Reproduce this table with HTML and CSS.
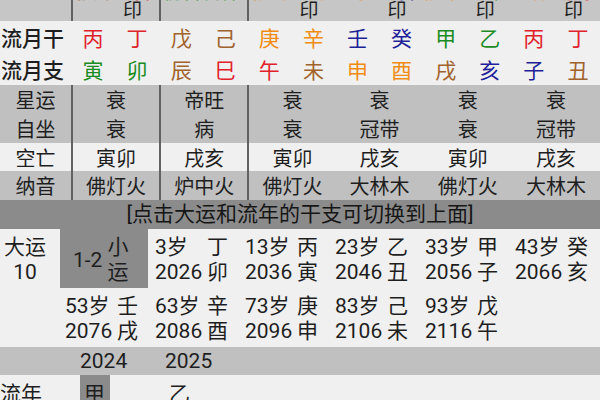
FILE: index.html
```html
<!DOCTYPE html>
<html lang="zh-CN">
<head>
<meta charset="utf-8">
<title>流月</title>
<link rel="stylesheet" href="styles.css">
</head>
<body>
<div class="page">
  <div class="row top g12">
    <div class="lab"></div>
    <div class="hc bl"><span class="gw"><span class="ghost earth">偏財</span></span><span class="yin"></span></div>
    <div class="hc"><span class="gw"><span class="ghost fire">正官</span></span><span class="yin">印</span></div>
    <div class="hc bl"><span class="gw"><span class="ghost wood">伤官</span></span><span class="yin"></span></div>
    <div class="hc"><span class="gw"><span class="ghost wood">食神</span></span><span class="yin"></span></div>
    <div class="hc bl"><span class="gw"><span class="ghost metal">偏財</span></span><span class="yin"></span></div>
    <div class="hc"><span class="gw"><span class="ghost metal">正財</span></span><span class="yin">印</span></div>
    <div class="hc"><span class="gw"><span class="ghost metal">七杀</span></span><span class="yin"></span></div>
    <div class="hc"><span class="gw"><span class="ghost water">正官</span></span><span class="yin">印</span></div>
    <div class="hc"><span class="gw"><span class="ghost metal">偏印</span></span><span class="yin"></span></div>
    <div class="hc"><span class="gw"><span class="ghost wood">正印</span></span><span class="yin">印</span></div>
    <div class="hc"><span class="gw"><span class="ghost metal">比肩</span></span><span class="yin"></span></div>
    <div class="hc"><span class="gw"><span class="ghost fire">劫财</span></span><span class="yin">印</span></div>
  </div>

  <div class="row light g12 big">
    <div class="lab left">流月干</div>
    <div class="c fire">丙</div><div class="c fire">丁</div>
    <div class="c earth">戊</div><div class="c earth">己</div>
    <div class="c metal">庚</div><div class="c metal">辛</div>
    <div class="c water">壬</div><div class="c water">癸</div>
    <div class="c wood">甲</div><div class="c wood">乙</div>
    <div class="c fire">丙</div><div class="c fire">丁</div>
  </div>
  <div class="row light g12 big">
    <div class="lab left">流月支</div>
    <div class="c wood">寅</div><div class="c wood">卯</div>
    <div class="c earth">辰</div><div class="c fire">巳</div>
    <div class="c fire">午</div><div class="c earth">未</div>
    <div class="c metal">申</div><div class="c metal">酉</div>
    <div class="c earth">戌</div><div class="c water">亥</div>
    <div class="c water">子</div><div class="c earth">丑</div>
  </div>

  <div class="row gray g6 mid">
    <div class="lab">星运</div>
    <div class="c bl">衰</div><div class="c bl">帝旺</div><div class="c bl">衰</div>
    <div class="c">衰</div><div class="c">衰</div><div class="c">衰</div>
  </div>
  <div class="row gray g6 mid">
    <div class="lab">自坐</div>
    <div class="c bl">衰</div><div class="c bl">病</div><div class="c bl">衰</div>
    <div class="c">冠带</div><div class="c">衰</div><div class="c">冠带</div>
  </div>
  <div class="row light g6 mid short">
    <div class="lab">空亡</div>
    <div class="c bl">寅卯</div><div class="c bl">戌亥</div><div class="c bl">寅卯</div>
    <div class="c">戌亥</div><div class="c">寅卯</div><div class="c">戌亥</div>
  </div>
  <div class="row gray g6 mid">
    <div class="lab">纳音</div>
    <div class="c bl">佛灯火</div><div class="c bl">炉中火</div><div class="c bl">佛灯火</div>
    <div class="c">大林木</div><div class="c">佛灯火</div><div class="c">大林木</div>
  </div>

  <div class="banner">[点击大运和流年的干支可切换到上面]</div>

  <div class="dayun">
    <div class="dy-lab"><span>大运</span><span>10</span></div>
    <div class="dy-cell sel"><span class="age-range">1-2</span><span class="pair"><span>小</span><span>运</span></span></div>
    <div class="dy-cell"><span class="nums"><span>3岁</span><span>2026</span></span><span class="pair"><span>丁</span><span>卯</span></span></div>
    <div class="dy-cell"><span class="nums"><span>13岁</span><span>2036</span></span><span class="pair"><span>丙</span><span>寅</span></span></div>
    <div class="dy-cell"><span class="nums"><span>23岁</span><span>2046</span></span><span class="pair"><span>乙</span><span>丑</span></span></div>
    <div class="dy-cell"><span class="nums"><span>33岁</span><span>2056</span></span><span class="pair"><span>甲</span><span>子</span></span></div>
    <div class="dy-cell"><span class="nums"><span>43岁</span><span>2066</span></span><span class="pair"><span>癸</span><span>亥</span></span></div>
    <div class="dy-lab"></div>
    <div class="dy-cell"><span class="nums"><span>53岁</span><span>2076</span></span><span class="pair"><span>壬</span><span>戌</span></span></div>
    <div class="dy-cell"><span class="nums"><span>63岁</span><span>2086</span></span><span class="pair"><span>辛</span><span>酉</span></span></div>
    <div class="dy-cell"><span class="nums"><span>73岁</span><span>2096</span></span><span class="pair"><span>庚</span><span>申</span></span></div>
    <div class="dy-cell"><span class="nums"><span>83岁</span><span>2106</span></span><span class="pair"><span>己</span><span>未</span></span></div>
    <div class="dy-cell"><span class="nums"><span>93岁</span><span>2116</span></span><span class="pair"><span>戊</span><span>午</span></span></div>
  </div>

  <div class="years">
    <span class="yr">2024</span><span class="yr">2025</span>
  </div>
  <div class="liunian">
    <span class="ln-lab">流年</span>
    <span class="ln-cell"><span class="stem sel">甲</span></span>
    <span class="ln-cell"><span class="stem">乙</span></span>
  </div>
</div>
</body>
</html>
```

FILE: styles.css
```css
html, body {
  margin: 0;
  padding: 0;
}
body {
  background: #f0f0f0;
  font-family: Roboto, "Noto Sans CJK SC", sans-serif;
  color: #1e1e1e;
  width: 600px;
  height: 400px;
  overflow: hidden;
}
.page {
  width: 600px;
}
.row {
  display: grid;
  align-items: stretch;
}
.g12 {
  grid-template-columns: 71px repeat(12, 1fr);
}
.g6 {
  grid-template-columns: 71px repeat(6, 1fr);
}
.top {
  height: 21px;
  background: #c6c6c6;
  overflow: hidden;
}
.light {
  background: #f0f0f0;
}
.gray {
  background: #c0c0c0;
}
.big {
  height: 32px;
  font-size: 21px;
}
.big .lab {
  font-weight: 500;
}
.mid {
  height: 29px;
  font-size: 20px;
}
.mid.short {
  height: 28px;
}
.lab {
  display: flex;
  align-items: center;
  justify-content: center;
}
.lab.left {
  justify-content: flex-start;
  padding-left: 1px;
}
.c {
  display: flex;
  align-items: center;
  justify-content: center;
}
.bl {
  border-left: 2px solid #626262;
}
.hc {
  display: flex;
  flex-direction: column;
  justify-content: flex-end;
  align-items: center;
  overflow: hidden;
  font-size: 19px;
  padding-right: 9px;
}
.hc.bl {
  padding-right: 0;
}
.gw {
  display: flex;
  align-items: flex-end;
  height: 2px;
  overflow: hidden;
  flex: none;
  opacity: 0.7;
}
.ghost {
  display: block;
  line-height: 19px;
  white-space: nowrap;
  flex: none;
}
.yin {
  display: block;
  height: 19px;
  line-height: 18px;
  flex: none;
}
.fire { color: #e0222b; }
.earth { color: #a2622c; }
.metal { color: #f08c12; }
.water { color: #1f1f9a; }
.wood { color: #1a8c22; }

.banner {
  height: 29px;
  background: #8b8b8b;
  font-size: 21px;
  line-height: 29px;
  text-align: center;
  color: #161616;
}

.dayun {
  display: grid;
  grid-template-columns: 60px repeat(6, 90px);
  grid-auto-rows: 59px;
  font-size: 21px;
  line-height: 25px;
}
.dy-lab {
  display: flex;
  flex-direction: column;
  align-items: center;
  justify-content: center;
  width: 50px;
  padding-top: 3px;
}
.dy-cell {
  display: flex;
  align-items: center;
  padding-left: 5px;
  padding-top: 3px;
}
.dy-cell.sel {
  background: #8b8b8b;
  margin-right: 2px;
  padding-left: 13px;
  gap: 5px;
}
.nums {
  display: flex;
  flex-direction: column;
  width: 52px;
}
.pair {
  display: flex;
  flex-direction: column;
}

.years {
  height: 28px;
  background: #c0c0c0;
  display: flex;
  padding-left: 80px;
  font-size: 21px;
  line-height: 28px;
}
.yr {
  width: 85px;
}
.liunian {
  display: flex;
  font-size: 21px;
  line-height: 28px;
  height: 40px;
}
.ln-lab {
  width: 80px;
  padding-top: 5px;
}
.ln-cell {
  width: 85px;
}
.stem {
  display: inline-block;
  padding: 5px 5px 0 4px;
}
.stem.sel {
  background: #8b8b8b;
}
```
